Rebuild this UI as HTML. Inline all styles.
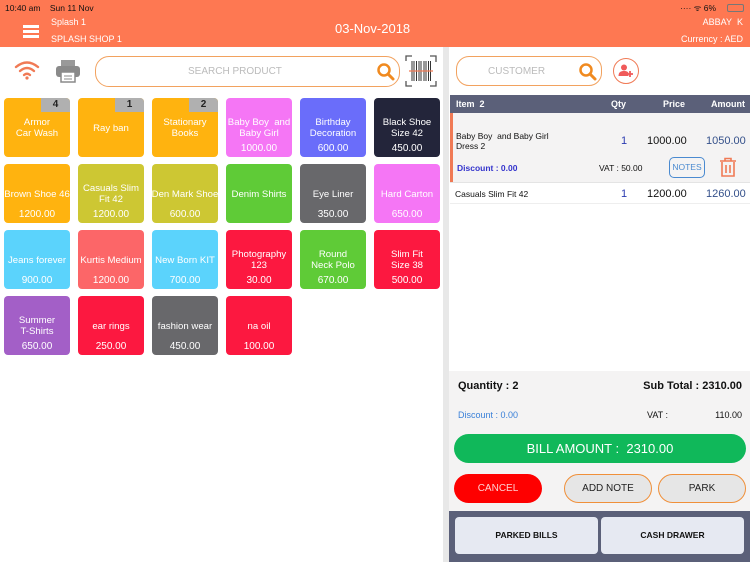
<!DOCTYPE html>
<html><head><style>
*{margin:0;padding:0;box-sizing:border-box}
body{width:750px;height:562px;position:relative;overflow:hidden;font-family:"Liberation Sans",Arial,sans-serif;background:#fff}
.abs{position:absolute}
.hdr{left:0;top:0;width:750px;height:47px;background:#fe7852;color:#fff}
.t{position:absolute;left:0;width:66px;height:59px;border-radius:4px;color:#fff;font-size:9.6px;text-align:center;overflow:hidden}
.t .n{position:absolute;left:-4px;right:-4px;top:8px;height:44px;display:flex;align-items:center;justify-content:center;line-height:11px;white-space:nowrap}
.t .p{position:absolute;left:0;right:0;bottom:3px;font-size:10px}
.t .b{position:absolute;right:0;top:0;width:29px;height:14px;background:#b0b0b0;color:#222;font-weight:bold;font-size:10px;line-height:14px;z-index:2}
.btn{position:absolute;border-radius:15px;font-size:10px;display:flex;align-items:center;justify-content:center;height:29px}
</style></head><body>
<div class="abs hdr">
 <div class="abs" style="left:5px;top:3px;font-size:8.5px;color:#111">10:40 am&nbsp;&nbsp;&nbsp; Sun 11 Nov</div>
 <div class="abs" style="left:23px;top:25px;width:16px;height:2.5px;background:#fff;box-shadow:0 5px 0 #fff,0 10px 0 #fff"></div>
 <div class="abs" style="left:51px;top:17px;font-size:9px">Splash 1</div>
 <div class="abs" style="left:51px;top:34px;font-size:9px">SPLASH SHOP 1</div>
 <div class="abs" style="left:335px;top:21px;font-size:13px">03-Nov-2018</div>
 <div class="abs" style="left:680px;top:3px;font-size:8.5px;color:#111">···· ᯤ 6%</div>
 <div class="abs" style="left:727px;top:4px;width:17px;height:8px;border:1px solid #777;border-radius:2px"></div>
 <div class="abs" style="right:7px;top:17px;font-size:9px">ABBAY&nbsp; K</div>
 <div class="abs" style="right:7px;top:34px;font-size:9px">Currency : AED</div>
</div>
<div class="abs" style="left:443px;top:47px;width:6px;height:515px;background:#e8e8e8"></div>
<svg class="abs" style="left:14px;top:60px" width="26" height="20" viewBox="0 0 26 20"><g fill="none" stroke="#f07a55" stroke-width="2.4" stroke-linecap="round"><path d="M2 7 Q13 -2 24 7"/><path d="M6 11 Q13 5 20 11"/><path d="M10 15 Q13 12.5 16 15"/></g><circle cx="13" cy="18" r="1.6" fill="#f07a55"/></svg>
<svg class="abs" style="left:55px;top:59px" width="26" height="24" viewBox="0 0 26 24"><rect x="6" y="1" width="14" height="6" fill="#999"/><rect x="1" y="7" width="24" height="11" rx="3" fill="#8a8a8a"/><rect x="6" y="13" width="14" height="10" fill="#fff" stroke="#8a8a8a" stroke-width="1.5"/><line x1="9" y1="17" x2="17" y2="17" stroke="#8a8a8a"/><line x1="9" y1="20" x2="17" y2="20" stroke="#8a8a8a"/></svg>
<div class="abs" style="left:95px;top:56px;width:305px;height:31px;border:1px solid #f2a25f;border-radius:14px"></div>
<div class="abs" style="left:188px;top:66px;font-size:10px;color:#bbb">SEARCH PRODUCT</div>
<svg class="abs" style="left:376px;top:62px" width="20" height="20" viewBox="0 0 20 20"><circle cx="8" cy="8" r="5.5" fill="none" stroke="#f08a20" stroke-width="2.5"/><line x1="12" y1="12" x2="17" y2="17" stroke="#f08a20" stroke-width="3" stroke-linecap="round"/></svg>
<svg class="abs" style="left:405px;top:55px" width="32" height="32" viewBox="0 0 32 32"><g fill="none" stroke="#555" stroke-width="1.3"><path d="M1 6V1h6M25 1h6v6M31 26v5h-6M7 31H1v-5"/></g><g stroke="#333"><path d="M7 6v20M9 6v20M11.5 6v20M14 6v20M16 6v20M19 6v20M21 6v20M23.5 6v20M25.5 6v20"/></g><line x1="4" y1="16" x2="28" y2="16" stroke="#f07a55" stroke-width="1.2"/></svg>

<div class="t" style="left:4px;top:98px;background:#ffb30f"><div class="b">4</div><div class="n">Armor<br>Car Wash</div></div>
<div class="t" style="left:78px;top:98px;background:#ffb30f"><div class="b">1</div><div class="n">Ray ban</div></div>
<div class="t" style="left:152px;top:98px;background:#ffb30f"><div class="b">2</div><div class="n">Stationary<br>Books</div></div>
<div class="t" style="left:226px;top:98px;background:#f576f5"><div class="n">Baby Boy &nbsp;and<br>Baby Girl</div><div class="p">1000.00</div></div>
<div class="t" style="left:300px;top:98px;background:#6a6dfa"><div class="n">Birthday<br>Decoration</div><div class="p">600.00</div></div>
<div class="t" style="left:374px;top:98px;background:#23253a"><div class="n">Black Shoe<br>Size 42</div><div class="p">450.00</div></div>

<div class="t" style="left:4px;top:164px;background:#ffb30f"><div class="n">Brown Shoe 46</div><div class="p">1200.00</div></div>
<div class="t" style="left:78px;top:164px;background:#cdc733"><div class="n">Casuals Slim<br>Fit 42</div><div class="p">1200.00</div></div>
<div class="t" style="left:152px;top:164px;background:#cdc733"><div class="n">Den Mark Shoe</div><div class="p">600.00</div></div>
<div class="t" style="left:226px;top:164px;background:#5fcb37"><div class="n">Denim Shirts</div><div class="p"></div></div>
<div class="t" style="left:300px;top:164px;background:#68686b"><div class="n">Eye Liner</div><div class="p">350.00</div></div>
<div class="t" style="left:374px;top:164px;background:#f576f5"><div class="n">Hard Carton</div><div class="p">650.00</div></div>

<div class="t" style="left:4px;top:230px;background:#5bd3fc"><div class="n">Jeans forever</div><div class="p">900.00</div></div>
<div class="t" style="left:78px;top:230px;background:#fc6668"><div class="n">Kurtis Medium</div><div class="p">1200.00</div></div>
<div class="t" style="left:152px;top:230px;background:#5bd3fc"><div class="n">New Born KIT</div><div class="p">700.00</div></div>
<div class="t" style="left:226px;top:230px;background:#fc1840"><div class="n">Photography<br>123</div><div class="p">30.00</div></div>
<div class="t" style="left:300px;top:230px;background:#5fcb37"><div class="n">Round<br>Neck Polo</div><div class="p">670.00</div></div>
<div class="t" style="left:374px;top:230px;background:#fc1840"><div class="n">Slim Fit<br>Size 38</div><div class="p">500.00</div></div>

<div class="t" style="left:4px;top:296px;background:#a35fc7"><div class="n">Summer<br>T-Shirts</div><div class="p">650.00</div></div>
<div class="t" style="left:78px;top:296px;background:#fc1840"><div class="n">ear rings</div><div class="p">250.00</div></div>
<div class="t" style="left:152px;top:296px;background:#68686b"><div class="n">fashion wear</div><div class="p">450.00</div></div>
<div class="t" style="left:226px;top:296px;background:#fc1840"><div class="n">na oil</div><div class="p">100.00</div></div>

<div class="abs" style="left:456px;top:56px;width:146px;height:30px;border:1px solid #f2a25f;border-radius:13px"></div>
<div class="abs" style="left:488px;top:66px;font-size:10px;color:#bbb">CUSTOMER</div>
<svg class="abs" style="left:578px;top:62px" width="20" height="20" viewBox="0 0 20 20"><circle cx="8" cy="8" r="5.5" fill="none" stroke="#f08a20" stroke-width="2.5"/><line x1="12" y1="12" x2="17" y2="17" stroke="#f08a20" stroke-width="3" stroke-linecap="round"/></svg>
<div class="abs" style="left:613px;top:58px;width:26px;height:26px;border:1px solid #f07a55;border-radius:50%"></div>
<svg class="abs" style="left:618px;top:63px" width="16" height="16" viewBox="0 0 16 16"><circle cx="6" cy="4.5" r="3" fill="#f05a5a"/><path d="M0.5 13c0-4 2.5-5 5.5-5s4 1 4.5 2v3z" fill="#f05a5a"/><path d="M12 8v6M9 11h6" stroke="#f05a5a" stroke-width="1.8"/></svg>
<div class="abs" style="left:450px;top:95px;width:300px;height:18px;background:#5b6079;color:#fff;font-weight:bold;font-size:9px;line-height:18px">
 <span class="abs" style="left:6px">Item&nbsp; 2</span><span class="abs" style="left:161px">Qty</span><span class="abs" style="left:213px">Price</span><span class="abs" style="left:261px">Amount</span></div>
<div class="abs" style="left:450px;top:113px;width:300px;height:69px;background:#f4f3f3;border-left:3px solid #f07a55"></div>
<div class="abs" style="left:456px;top:131px;font-size:8.5px;line-height:10px;color:#111">Baby Boy&nbsp; and Baby Girl<br>Dress 2</div>
<div class="abs" style="left:621px;top:135px;font-size:11px;color:#2a3ab0">1</div>
<div class="abs" style="left:647px;top:135px;font-size:11px;color:#111">1000.00</div>
<div class="abs" style="left:706px;top:135px;font-size:11px;color:#34508a">1050.00</div>
<div class="abs" style="left:457px;top:163px;font-size:8.5px;color:#3333cc;font-weight:bold">Discount : 0.00</div>
<div class="abs" style="left:599px;top:163px;font-size:8.5px;color:#111">VAT : 50.00</div>
<div class="abs" style="left:669px;top:157px;width:36px;height:21px;border:1.5px solid #4a8ad0;border-radius:5px;font-size:8.5px;color:#4a8ad0;text-align:center;line-height:18px">NOTES</div>
<svg class="abs" style="left:719px;top:157px" width="18" height="21" viewBox="0 0 18 21"><g fill="none" stroke="#f07a55" stroke-width="1.6"><path d="M1 4h16M6 4V1.5h6V4"/><path d="M3 5v14h12V5"/><path d="M7 8v8M11 8v8"/></g></svg>
<div class="abs" style="left:450px;top:182px;width:300px;height:1px;background:#e4e4e4"></div>
<div class="abs" style="left:455px;top:189px;font-size:8.5px;color:#111">Casuals Slim Fit 42</div>
<div class="abs" style="left:621px;top:188px;font-size:11px;color:#2a3ab0">1</div>
<div class="abs" style="left:647px;top:188px;font-size:11px;color:#111">1200.00</div>
<div class="abs" style="left:706px;top:188px;font-size:11px;color:#34508a">1260.00</div>
<div class="abs" style="left:450px;top:203px;width:300px;height:1px;background:#eee"></div>

<div class="abs" style="left:449px;top:371px;width:301px;height:140px;background:#f4f3f3"></div>
<div class="abs" style="left:458px;top:380px;font-size:11px;font-weight:bold;color:#111">Quantity : 2</div>
<div class="abs" style="right:8px;top:380px;font-size:11px;font-weight:bold;color:#111">Sub Total : 2310.00</div>
<div class="abs" style="left:458px;top:410px;font-size:9px;color:#3a80d8">Discount : 0.00</div>
<div class="abs" style="left:647px;top:410px;font-size:9px;color:#111">VAT :</div>
<div class="abs" style="right:8px;top:410px;font-size:9px;color:#111">110.00</div>
<div class="abs" style="left:454px;top:434px;width:292px;height:29px;border-radius:15px;background:#10b85a;color:#fff;font-size:13px;text-align:center;line-height:29px">BILL AMOUNT :&nbsp; 2310.00</div>
<div class="btn" style="left:454px;top:474px;width:88px;background:#fe0000;color:#ffd0d0">CANCEL</div>
<div class="btn" style="left:564px;top:474px;width:88px;background:#e6e6e6;border:1.5px solid #f0903a;color:#222">ADD NOTE</div>
<div class="btn" style="left:658px;top:474px;width:88px;background:#e6e6e6;border:1.5px solid #f0903a;color:#222">PARK</div>
<div class="abs" style="left:449px;top:511px;width:301px;height:51px;background:#5b6079"></div>
<div class="abs" style="left:455px;top:517px;width:143px;height:37px;background:#e6e9f2;border-radius:4px;font-size:8.5px;font-weight:bold;text-align:center;line-height:37px;color:#111">PARKED BILLS</div>
<div class="abs" style="left:601px;top:517px;width:143px;height:37px;background:#e6e9f2;border-radius:4px;font-size:8.5px;font-weight:bold;text-align:center;line-height:37px;color:#111">CASH DRAWER</div>
</body></html>
